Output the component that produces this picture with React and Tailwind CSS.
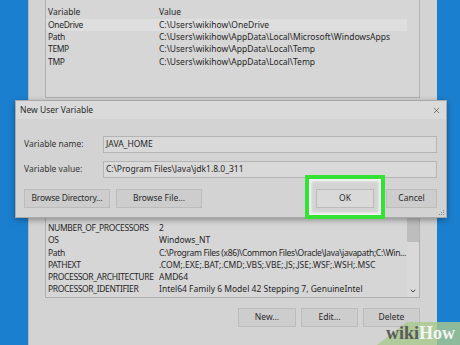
import { ChevronDown, X } from 'lucide-react'

const userVars = [
  { name: 'OneDrive', value: 'C:\\Users\\wikihow\\OneDrive', selected: true },
  { name: 'Path', value: 'C:\\Users\\wikihow\\AppData\\Local\\Microsoft\\WindowsApps' },
  { name: 'TEMP', value: 'C:\\Users\\wikihow\\AppData\\Local\\Temp' },
  { name: 'TMP', value: 'C:\\Users\\wikihow\\AppData\\Local\\Temp' },
]

const systemVars = [
  { name: 'NUMBER_OF_PROCESSORS', value: '2' },
  { name: 'OS', value: 'Windows_NT' },
  { name: 'Path', value: 'C:\\Program Files (x86)\\Common Files\\Oracle\\Java\\javapath;C:\\Win...', tight: true },
  { name: 'PATHEXT', value: '.COM;.EXE;.BAT;.CMD;.VBS;.VBE;.JS;.JSE;.WSF;.WSH;.MSC' },
  { name: 'PROCESSOR_ARCHITECTURE', value: 'AMD64' },
  { name: 'PROCESSOR_IDENTIFIER', value: 'Intel64 Family 6 Model 42 Stepping 7, GenuineIntel' },
]

function Row({ v }) {
  return (
    <div className={['flex h-[12.3px] items-center whitespace-nowrap', v.selected ? 'mr-[12px] bg-[#dedede]' : ''].join(' ')}>
      <span className="w-[113px] shrink-0 pl-[2px] tracking-[-0.35px]">{v.name}</span>
      <span className={v.tight ? 'tracking-[-0.32px]' : ''}>{v.value}</span>
    </div>
  )
}

function WinButton({ children, className = '' }) {
  return (
    <div className={'flex h-[19px] items-center justify-center whitespace-nowrap border border-[#bcbcbc] bg-[#cdcdcd] text-[8.5px] text-[#2a2a2a] ' + className}>
      {children}
    </div>
  )
}

export default function App() {
  return (
    <div
      className="relative flex h-[345px] w-[460px] overflow-hidden bg-[#1b7fcf] text-[8.5px] text-[#262626]"
      style={{ fontFamily: '"Noto Sans", "Open Sans", sans-serif' }}
    >
      <div className="w-[28px] shrink-0" />

      {/* Environment Variables window */}
      <div className="flex w-[409px] shrink-0 flex-col border-l border-[#b9b9b9] bg-[#d3d3d3] pl-[16px] pr-[17px]">
        <div className="-mt-[4px] h-[102px] border border-[#b0b0b0] bg-[#d6d6d6] pt-[8px]">
          <div className="flex h-[14px] items-center whitespace-nowrap">
            <span className="w-[113px] shrink-0 pl-[2px]">Variable</span>
            <span>Value</span>
          </div>
          {userVars.map((v) => (
            <Row key={v.name} v={v} />
          ))}
        </div>

        <div className="mt-[103px] flex h-[97px] border border-[#b0b0b0] bg-[#d6d6d6]">
          <div className="flex min-w-0 flex-1 flex-col justify-end overflow-hidden pb-[1px]">
            {systemVars.map((v) => (
              <Row key={v.name} v={v} />
            ))}
          </div>
          <div className="flex w-[12px] shrink-0 flex-col bg-[#d9d9d9]">
            <div className="h-[40px] bg-[#bdbdbd]" />
            <div className="flex-1" />
            <ChevronDown className="mb-[2px] ml-[2px] h-[8px] w-[8px] text-[#444]" strokeWidth={3} />
          </div>
        </div>

        <div className="mt-[10px] flex justify-end gap-[5px]">
          <WinButton className="w-[58px]">New...</WinButton>
          <WinButton className="w-[57px]">Edit...</WinButton>
          <WinButton className="w-[57px]">Delete</WinButton>
        </div>
      </div>

      {/* New User Variable dialog */}
      <div className="absolute left-[15px] top-[100px] flex h-[118px] w-[432px] flex-col border border-[#a9a9a9] bg-[#d3d3d3] shadow-[0_2px_6px_rgba(0,0,0,0.35)]">
        <div className="flex h-[18px] items-center justify-between bg-[#dadada] pl-[4px] pr-[5px] text-[8.5px] text-[#2a2a2a]">
          <span>New User Variable</span>
          <X className="h-[9px] w-[9px] text-[#333]" strokeWidth={1.5} />
        </div>
        <div className="flex flex-col pl-[8px] pr-[9px] pt-[17px]">
          <div className="flex items-center">
            <span className="w-[79px] shrink-0 text-[#333]">Variable name:</span>
            <div className="flex h-[17px] flex-1 items-center border border-[#b4b4b4] bg-[#d9d9d9] pl-[2px]">JAVA_HOME</div>
          </div>
          <div className="mt-[8px] flex items-center">
            <span className="w-[79px] shrink-0 text-[#333]">Variable value:</span>
            <div className="flex h-[17px] flex-1 items-center border border-[#b4b4b4] bg-[#d9d9d9] pl-[2px]">C:\Program Files\Java\jdk1.8.0_311</div>
          </div>
          <div className="mt-[11px] flex items-center">
            <WinButton className="w-[86px] tracking-[-0.2px]">Browse Directory...</WinButton>
            <WinButton className="ml-[6px] w-[86px]">Browse File...</WinButton>
            <div className="flex-1" />
            <WinButton className="w-[58px] border-[#6e7887] bg-[#d9d9d9]">OK</WinButton>
            <WinButton className="ml-[12px] w-[51px]">Cancel</WinButton>
          </div>
        </div>
        <svg className="absolute bottom-[1px] right-[1px]" width="6" height="6" viewBox="0 0 6 6">
          <rect x="4" y="0" width="1" height="1" fill="#888" />
          <rect x="2" y="2" width="1" height="1" fill="#888" />
          <rect x="4" y="2" width="1" height="1" fill="#888" />
          <rect x="0" y="4" width="1" height="1" fill="#888" />
          <rect x="2" y="4" width="1" height="1" fill="#888" />
          <rect x="4" y="4" width="1" height="1" fill="#888" />
        </svg>
      </div>

      {/* green highlight around OK */}
      <div className="absolute left-[305px] top-[175px] h-[44px] w-[80px] border-[4px] border-[#33e233] shadow-[inset_0_0_3px_2px_rgba(255,255,255,0.85)]" />

      {/* wikiHow watermark */}
      <svg className="absolute bottom-0 right-0" width="83" height="23" viewBox="0 0 83 23">
        <polygon points="0,23 83,23 83,0 30,0" fill="#a9c98c" opacity="0.8" />
      </svg>
      <div
        className="absolute bottom-[3px] right-[5px] text-[18px] font-bold leading-none"
        style={{ fontFamily: '"Liberation Serif", serif' }}
      >
        <span className="text-[#5a5a5a]">wiki</span>
        <span className="text-[#f4f4f4]">How</span>
      </div>
    </div>
  )
}
